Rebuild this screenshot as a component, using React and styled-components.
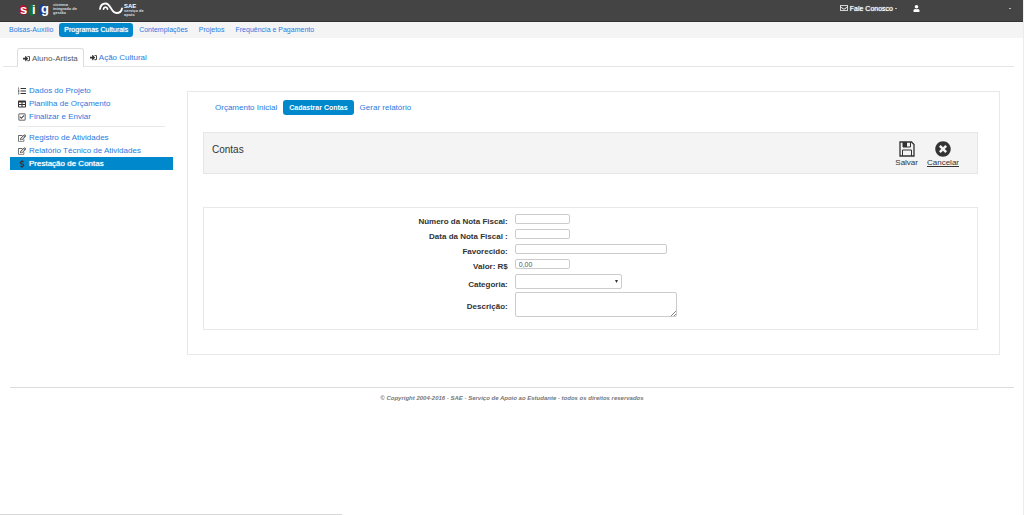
import React from "react";
import styled, { createGlobalStyle, css } from "styled-components";
import {
  FaSignInAlt, FaListOl, FaTable, FaRegCheckSquare, FaRegEdit,
  FaDollarSign, FaRegEnvelope, FaUser, FaTimesCircle,
} from "react-icons/fa";

const Global = createGlobalStyle`
  * { box-sizing: border-box; }
  body {
    margin: 0;
    background: #fff;
    color: #333;
    font: 8px/13px "Liberation Sans", Arial, sans-serif;
  }
  a { color: #2a7ae2; text-decoration: none; }
  ul { list-style: none; margin: 0; padding: 0; }
`;

const Page = styled.div`
  border-right: 1px solid #ececec;
  min-height: 100vh;
`;

const Header = styled.header`
  display: flex;
  align-items: flex-start;
  height: 22px;
  padding: 0 12px 0 19px;
  background: #444;
  border-bottom: 1px solid #333;
  color: #fff;
`;

const Brand = styled.div`
  display: flex;
  align-items: flex-start;
  gap: ${(p) => p.$gap}px;
  width: 80px;
  padding-top: 2px;
`;

const BrandText = styled.span`
  padding-top: ${(p) => p.$top || 0}px;
  color: #ddd;
  font-size: 4px;
  line-height: 4px;
  font-weight: bold;
  white-space: pre-line;
`;

const BrandName = styled.strong`
  display: block;
  color: #fff;
  font-size: 6px;
  line-height: 5px;
`;

const HeaderLinks = styled.nav`
  display: flex;
  align-items: center;
  gap: 16px;
  height: 16px;
  margin-left: auto;
`;

const HeaderLink = styled.a`
  display: flex;
  align-items: center;
  gap: 2px;
  min-width: ${(p) => p.$min || 0}px;
  color: #fff;
  font-size: 7px;
  text-shadow: 0 0 1px #fff;
`;

const Caret = styled.span`
  width: 2px;
  height: 1px;
  margin-left: ${(p) => (p.$end ? "auto" : 0)};
  background: #bbb;
`;

const SubNav = styled.nav`
  display: flex;
  align-items: center;
  gap: 1px;
  height: 16px;
  padding: 0 4px;
  background: #f4f4f4;
  font-size: 7px;
`;

const Pill = styled.a`
  padding: 0 5px;
  border-radius: 3px;
  line-height: 14px;
  ${(p) => p.$active && css`
    background: #08c;
    color: #fff;
    text-shadow: 0 0 1px #fff;
  `}
`;

const Tabs = styled.nav`
  display: flex;
  margin: 10px 9px 0 3px;
  padding-left: 14px;
  border-bottom: 1px solid #e4e4e4;
`;

const Tab = styled.a`
  display: flex;
  align-items: center;
  gap: 2px;
  height: 18px;
  padding: 0 5px;
  border: 1px solid transparent;
  border-bottom: 0;
  border-radius: 3px 3px 0 0;
  svg { color: #333; }
  ${(p) => p.$active && css`
    margin-bottom: -1px;
    height: 19px;
    background: #fff;
    border-color: #ddd;
    color: #555;
  `}
`;

const Body = styled.div`
  display: flex;
  align-items: flex-start;
  gap: 14px;
  padding: 17px 23px 0 10px;
`;

const Sidebar = styled.aside`
  flex: 0 0 163px;
`;

const SideLink = styled.a`
  display: flex;
  align-items: center;
  gap: 3px;
  height: 13px;
  padding-left: 8px;
  svg { color: #333; }
  ${(p) => p.$active && css`
    background: #08c;
    color: #fff;
    text-shadow: 0 0 1px #fff;
  `}
`;

const Divider = styled.hr`
  margin: 3px 8px 4px;
  border: 0;
  border-top: 1px solid #e8e8e8;
`;

const Panel = styled.main`
  flex: 1;
  min-width: 0;
  margin-top: 7px;
  padding: 8px 21px 24px 15px;
  border: 1px solid #e8e8e8;
`;

const PanelTabs = styled.nav`
  display: flex;
  padding-left: 6px;
`;

const PanelTab = styled.a`
  padding: 0 6px;
  border-radius: 3px;
  line-height: 15px;
  ${(p) => p.$active && css`
    background: #08c;
    color: #fff;
    font-size: 7px;
    font-weight: bold;
  `}
`;

const TitleBar = styled.div`
  display: flex;
  justify-content: space-between;
  height: 42px;
  margin-top: 17px;
  padding: 8px 18px 0 8px;
  background: #f4f4f4;
  border: 1px solid #e6e6e6;
`;

const Title = styled.h1`
  margin: 2px 0 0;
  font-size: 10px;
  line-height: 13px;
  font-weight: normal;
`;

const Actions = styled.div`
  display: flex;
  align-items: flex-start;
  gap: 9px;
`;

const Action = styled.button`
  display: flex;
  flex-direction: column;
  align-items: center;
  padding: 0;
  border: 0;
  background: none;
  color: #333;
  font: inherit;
  line-height: 11px;
  text-decoration: ${(p) => (p.$underlined ? "underline" : "none")};
`;

const Form = styled.form`
  display: grid;
  grid-template-columns: 27fr 41fr;
  grid-template-rows: repeat(4, 11px) 14px 25px;
  gap: 4px 7px;
  margin-top: 33px;
  padding: 6px 1px 12px 0;
  border: 1px solid #e8e8e8;
`;

const Label = styled.label`
  align-self: ${(p) => (p.$middle ? "center" : "end")};
  font-weight: bold;
  line-height: 6px;
  padding-top: ${(p) => (p.$middle ? 4 : 0)}px;
  text-align: right;
`;

const control = css`
  display: block;
  margin: 0;
  padding: 0 3px;
  border: 1px solid #ccc;
  border-radius: 2px;
  background: #fff;
  color: #555;
  font: 7px/8px "Liberation Sans", Arial, sans-serif;
`;

const Input = styled.input`
  ${control}
  width: ${(p) => (p.$wide ? 152 : 55)}px;
  height: 10px;
`;

const Field = styled.div`
  position: relative;
  width: ${(p) => p.$width}px;
  > svg {
    position: absolute;
    right: ${(p) => p.$inset}px;
    bottom: ${(p) => p.$inset}px;
    pointer-events: none;
  }
`;

const Select = styled.select`
  ${control}
  appearance: none;
  width: 100%;
  height: 15px;
`;

const TextArea = styled.textarea`
  ${control}
  width: 100%;
  height: 25px;
  resize: none;
`;

const Footer = styled.footer`
  margin: 32px 9px 0 10px;
  padding-top: 4px;
  border-top: 1px solid #ddd;
  color: #777;
  font-size: 6px;
  font-style: italic;
  font-weight: bold;
  text-align: center;
`;

const StatusLine = styled.div`
  position: fixed;
  left: 0;
  bottom: 0;
  width: 33%;
  min-width: 342px;
  height: 1px;
  background: #d8d8d8;
`;

const SigLogo = () => (
  <svg width="31" height="16" viewBox="0 0 31 16" aria-label="sig">
    <ellipse cx="4" cy="8" rx="4" ry="5" fill="#b3122b" />
    <ellipse cx="13" cy="8" rx="3" ry="6" fill="#16703a" />
    <ellipse cx="23" cy="8" rx="3" ry="6" fill="#1b3f94" />
    <g fill="#fff" fontFamily="Liberation Sans, Arial, sans-serif" fontWeight="bold" fontSize="13">
      <text x="1" y="12">s</text>
      <text x="13" y="12">i</text>
      <text x="22" y="11">g</text>
    </g>
  </svg>
);

const SaeLogo = () => (
  <svg width="24" height="14" viewBox="0 0 24 14" fill="none" stroke="#fff" strokeLinecap="round" aria-hidden="true">
    <path d="M1 7C1.500 3 4 1.500 6.500 1.500C12 1.500 12 11 17.500 11C20.500 11 22.500 9.500 23 6.500" strokeWidth="1.800" />
    <path d="M4.500 7C5 4.500 8 4.500 8.500 7" strokeWidth="1.800" />
  </svg>
);

const SaveIcon = () => (
  <svg width="16" height="16" viewBox="0 0 16 16" fill="none" stroke="#333" aria-hidden="true">
    <path d="M1 1h11.500L15 3.500V15H1z" strokeWidth="1.300" />
    <path d="M3.500 15V9h9v6" />
    <path d="M4 1v5h7.500V1" />
    <path d="M4 1h4v5H4z" fill="#333" stroke="none" />
  </svg>
);

const topLinks = ["Bolsas-Auxílio", "Programas Culturais", "Contemplações", "Projetos", "Frequência e Pagamento"];
const projectLinks = [
  ["Dados do Projeto", FaListOl],
  ["Planilha de Orçamento", FaTable],
  ["Finalizar e Enviar", FaRegCheckSquare],
];
const reportLinks = [
  ["Registro de Atividades", FaRegEdit],
  ["Relatório Técnico de Atividades", FaRegEdit],
  ["Prestação de Contas", FaDollarSign],
];
const panelTabs = ["Orçamento Inicial", "Cadastrar Contas", "Gerar relatório"];

const SideList = ({ items }) => (
  <ul>
    {items.map(([text, Icon]) => (
      <li key={text}>
        <SideLink href="#" $active={text === "Prestação de Contas"}>
          <Icon size={8} />{text}
        </SideLink>
      </li>
    ))}
  </ul>
);

export default function App() {
  return (
    <Page>
      <Global />
      <Header>
        <Brand $gap={3}>
          <SigLogo />
          <BrandText $top={1}>{"sistema\nintegrado de\ngestão"}</BrandText>
        </Brand>
        <Brand $gap={1}>
          <SaeLogo />
          <BrandText $top={2}><BrandName>SAE</BrandName>{"serviço de\napoio"}</BrandText>
        </Brand>
        <HeaderLinks>
          <HeaderLink href="#"><FaRegEnvelope size={8} />Fale Conosco<Caret /></HeaderLink>
          <HeaderLink href="#" $min={98} aria-label="Usuário"><FaUser size={7} /><Caret $end /></HeaderLink>
        </HeaderLinks>
      </Header>
      <SubNav>
        {topLinks.map((t) => <Pill key={t} href="#" $active={t === "Programas Culturais"}>{t}</Pill>)}
      </SubNav>
      <Tabs>
        <Tab href="#" $active><FaSignInAlt size={7} />Aluno-Artista</Tab>
        <Tab href="#"><FaSignInAlt size={7} />Ação Cultural</Tab>
      </Tabs>
      <Body>
        <Sidebar>
          <SideList items={projectLinks} />
          <Divider />
          <SideList items={reportLinks} />
        </Sidebar>
        <Panel>
          <PanelTabs>
            {panelTabs.map((t) => <PanelTab key={t} href="#" $active={t === "Cadastrar Contas"}>{t}</PanelTab>)}
          </PanelTabs>
          <TitleBar>
            <Title>Contas</Title>
            <Actions>
              <Action type="button"><SaveIcon />Salvar</Action>
              <Action type="button" $underlined><FaTimesCircle size={16} />Cancelar</Action>
            </Actions>
          </TitleBar>
          <Form>
            <Label htmlFor="numero">Número da Nota Fiscal:</Label>
            <Input id="numero" />
            <Label htmlFor="data">Data da Nota Fiscal :</Label>
            <Input id="data" />
            <Label htmlFor="favorecido">Favorecido:</Label>
            <Input id="favorecido" $wide />
            <Label htmlFor="valor">Valor: R$</Label>
            <Input id="valor" defaultValue="0,00" />
            <Label htmlFor="categoria">Categoria:</Label>
            <Field $width={107} $inset={4}>
              <Select id="categoria"><option /></Select>
              <svg width="3" height="4" viewBox="0 0 3 4"><path d="M0 0h3L1.500 3z" fill="#333" /></svg>
            </Field>
            <Label htmlFor="descricao" $middle>Descrição:</Label>
            <Field $width={162} $inset={1}>
              <TextArea id="descricao" />
              <svg width="5" height="5" viewBox="0 0 5 5" stroke="#888"><path d="M0 5L5 0M3 5L5 3" /></svg>
            </Field>
          </Form>
        </Panel>
      </Body>
      <Footer>© Copyright 2004-2016 - SAE - Serviço de Apoio ao Estudante - todos os direitos reservados</Footer>
      <StatusLine />
    </Page>
  );
}
